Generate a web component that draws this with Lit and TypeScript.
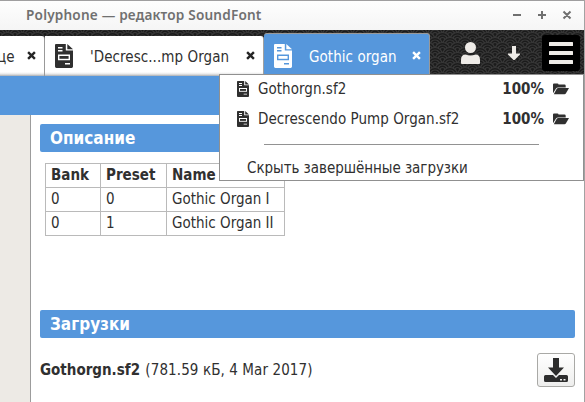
import { LitElement, html, css, svg } from "lit";
import { customElement, property } from "lit/decorators.js";

const docIcon = (bg: string, fg: string) => svg`
  <path fill=${fg} d="M1 0H10.800V6.5H18V22.6Q18 24 16.6 24H1.4Q0 24 0 22.6V1Q0 0 1 0Z"/>
  <path fill=${fg} d="M12.3 0L18 5.3H12.3Z"/>
  <path fill=${bg} d="M3 3H7.5V4.4H3ZM3 6H7.5V7.4H3ZM3 10.5H15V16.3H3ZM10 19H15V20.4H10Z"/>
  <path fill=${fg} d="M4.4 12H13.6V14.8H4.4Z"/>`;

@customElement("doc-icon")
export class DocIcon extends LitElement {
  @property() fg = "#2f2f2f";
  @property() bg = "#fff";
  static styles = css`
    :host { display: block; }
    svg { display: block; width: 100%; height: 100%; }
  `;
  render() {
    return html`<svg viewBox="0 0 18 24" preserveAspectRatio="none">${docIcon(this.bg, this.fg)}</svg>`;
  }
}

@customElement("app-root")
export class AppRoot extends LitElement {
  static styles = css`
    :host {
      display: block;
      position: relative;
      width: 585px;
      height: 402px;
      overflow: hidden;
      box-sizing: border-box;
      background: #fff;
      color: #303030;
      border-right: 1px solid #a2a2a2;
      font: 15px/20px "DejaVu Sans Condensed", "DejaVu Sans", sans-serif;
      font-stretch: condensed;
      white-space: nowrap;
    }
    * { box-sizing: border-box; }
    svg { display: block; flex: none; }
    .titlebar {
      height: 30px;
      display: flex;
      align-items: center;
      border-top: 1px solid #a09fa0;
      background: linear-gradient(#fefefe, #f5f5f5);
      padding: 0 12px 0 26px;
      justify-content: space-between;
    }
    .title {
      font: 600 13.6px/20px "Noto Sans", "Open Sans", sans-serif;
      font-stretch: normal;
      color: #707070;
      letter-spacing: 0.19px;
      margin-top: -2px;
    }
    .toolbar { position: relative; height: 46px; display: flex; align-items: flex-end; background: #1d1d1d; }
    .pattern { position: absolute; inset: 0; width: 100%; height: 100%; }
    .tab {
      position: relative;
      height: 40px;
      display: flex;
      align-items: center;
      background: linear-gradient(#fff 36px, #e8e8e8 38px, #a9adb3 40px);
      border-right: 1px solid #999;
      border-top-right-radius: 3px;
    }
    .first { width: 45px; justify-content: space-between; padding-right: 8px; }
    .first span { margin-left: -3px; padding-top: 1px; }
    .second { width: 219px; padding: 0 8px 0 10px; border-right-color: #a0a0a0; }
    .active {
      width: 166px;
      height: 43px;
      padding: 2px 8px 0 10px;
      border-top: 1px solid #999;
      border-radius: 3px 3px 0 0;
      background: #5697dc;
      color: #fff;
    }
    .tab doc-icon { width: 18px; height: 24px; flex: none; }
    .label { margin-left: 17px; flex: 1; padding-top: 2px; letter-spacing: 0.06px; }
    .close { margin-top: -2px; }
    .tools { position: relative; height: 46px; display: flex; align-items: center; flex: 1; padding: 0 4px 0 31px; }
    .arrow { margin-left: 28px; }
    .menu {
      margin-left: auto;
      width: 38px;
      height: 36px;
      border-radius: 3px;
      background: #000;
      display: flex;
      flex-direction: column;
      align-items: center;
      justify-content: center;
      gap: 5px;
    }
    .menu i { width: 24px; height: 4px; background: #eeebe7; border-radius: 0.5px; }
    .band { height: 39px; background: #5697dc; }
    .body { display: flex; height: 287px; }
    .side { width: 31px; background: #edeae5; border-right: 1px solid #9c9c9c; }
    .content { flex: 1; padding: 9px 9px 0; }
    .heading {
      height: 28px;
      border-radius: 2px;
      background: #5697dc;
      color: #fff;
      font-weight: 700;
      font-size: 17px;
      line-height: 28px;
      padding-left: 10px;
    }
    table { border-collapse: collapse; table-layout: fixed; width: 240px; margin: 11px 0 74px 5px; }
    th, td { border: 1px solid #bababa; height: 24px; padding: 0 5px 1px; text-align: left; line-height: 21px; }
    th:nth-child(1) { width: 55px; }
    th:nth-child(2) { width: 66px; }
    .file { display: flex; align-items: center; justify-content: space-between; margin-top: 15px; }
    .meta { margin-left: 1px; letter-spacing: 0.1px; }
    .save {
      width: 38px;
      height: 34px;
      border: 1px solid #a9a9a6;
      border-radius: 3px;
      background: linear-gradient(#fff, #eeeeed);
      display: grid;
      place-items: center;
    }
    .popup {
      position: absolute;
      left: 219px;
      top: 74px;
      width: 365px;
      height: 107px;
      background: #fff;
      border: 1px solid #909090;
    }
    .row { display: flex; align-items: center; height: 30px; padding: 0 14px 0 17px; }
    .row doc-icon { width: 12px; height: 16px; margin: -2px 9px 0 0; }
    .row b, .row span { padding-bottom: 2px; }
    .row span { letter-spacing: 0.04px; }
    .row b { margin-left: auto; margin-right: 9px; }
    .row svg { margin-top: -2px; }
    .rule { height: 1px; background: #929292; margin: 9px 44px 13px; }
    .hide { padding-left: 27px; letter-spacing: -0.04px; }
  `;

  private cross(color: string) {
    return html`<svg class="close" width="9" height="9" viewBox="0 0 9 9">
      <path d="M1.1 1.1L7.9 7.9M7.9 1.1L1.1 7.9" stroke=${color} stroke-width="2.4" />
    </svg>`;
  }

  private scale(x: number, y: number) {
    return svg`<g transform="translate(${x} ${y})" stroke="#373737" stroke-width="1.2" fill="#1b1b1b">
      <circle r="7.5"/><circle r="5"/><circle r="2.5"/></g>`;
  }

  private file(name: string) {
    return html`<div class="row">
      <doc-icon></doc-icon><span>${name}</span><b>100%</b>
      <svg width="16" height="12" viewBox="0 0 16 12" fill="#303030">
        <path d="M0 10V1.5Q0 .5 1 .5H4.5Q5.5 .5 5.5 1.5H11.5Q12.7 1.5 12.7 2.7V4.400H5Q3.8 4.400 3 5.400L.2 10Z" />
        <path d="M.8 11.2L3.6 6Q4.2 5 5.2 5H16L13 10.3Q12.4 11.2 11.5 11.2Z" />
      </svg>
    </div>`;
  }

  render() {
    return html`
      <div class="titlebar">
        <span class="title">Polyphone — редактор SoundFont</span>
        <svg width="60" height="12" viewBox="0 0 60 12" fill="none" stroke="#707070" stroke-width="2">
          <path d="M1 5H9M26 5H34M30 1V9M51.5 1.5L58.5 8.5M58.5 1.5L51.5 8.5" />
        </svg>
      </div>
      <div class="toolbar">
        <svg class="pattern">
          <defs>
            <pattern id="scales" width="15" height="10" patternUnits="userSpaceOnUse">
              ${this.scale(7.5, 0)}${this.scale(0, 5)}${this.scale(15, 5)}${this.scale(7.5, 10)}${this.scale(0, 15)}${this.scale(15, 15)}
            </pattern>
          </defs>
          <rect width="100%" height="100%" fill="url(#scales)" />
        </svg>
        <div class="tab first"><span>це</span>${this.cross("#252525")}</div>
        <div class="tab second">
          <doc-icon></doc-icon><span class="label">'Decresc...mp Organ</span>${this.cross("#252525")}
        </div>
        <div class="tab active">
          <doc-icon fg="#fff" bg="#5697dc"></doc-icon><span class="label">Gothic organ</span>${this.cross("#fff")}
        </div>
        <div class="tools">
          <svg width="19" height="22" viewBox="0 0 19 22" fill="#eeebe7">
            <circle cx="9.5" cy="5.5" r="5.5" />
            <path d="M0 21.2V18Q0 12.500 4.5 12.500Q9.5 14.500 14.5 12.500Q19 12.500 19 18V21.2Q19 22 18 22H1Q0 22 0 21.2Z" />
          </svg>
          <svg class="arrow" width="12" height="14" viewBox="0 0 12 14" fill="#eeebe7">
            <path d="M4 0H8V7.500H12V8.500L6.500 14H5.500L0 8.500V7.500H4Z" />
          </svg>
          <div class="menu"><i></i><i></i><i></i></div>
        </div>
      </div>
      <div class="band"></div>
      <div class="body">
        <div class="side"></div>
        <div class="content">
          <div class="heading">Описание</div>
          <table>
            <tr><th>Bank</th><th>Preset</th><th>Name</th></tr>
            <tr><td>0</td><td>0</td><td>Gothic Organ I</td></tr>
            <tr><td>0</td><td>1</td><td>Gothic Organ II</td></tr>
          </table>
          <div class="heading">Загрузки</div>
          <div class="file">
            <span><b>Gothorgn.sf2</b> <span class="meta">(781.59 кБ, 4 Mar 2017)</span></span>
            <div class="save">
              <svg width="24" height="24" viewBox="0 0 24 24" fill="#2d2d2d">
                <path d="M9 0H15V9.500H20L12 18L4 9.500H9Z" />
                <path fill-rule="evenodd" d="M1.500 17H9L12 20L15 17H22.500Q24 17 24 18.500V22.500Q24 24 22.500 24H1.500Q0 24 0 22.500V18.500Q0 17 1.500 17ZM16 21V22.600H18V21ZM19.500 21V22.600H21.500V21Z" />
              </svg>
            </div>
          </div>
        </div>
      </div>
      <div class="popup">
        ${this.file("Gothorgn.sf2")}${this.file("Decrescendo Pump Organ.sf2")}
        <div class="rule"></div>
        <div class="hide">Скрыть завершённые загрузки</div>
      </div>
    `;
  }
}
